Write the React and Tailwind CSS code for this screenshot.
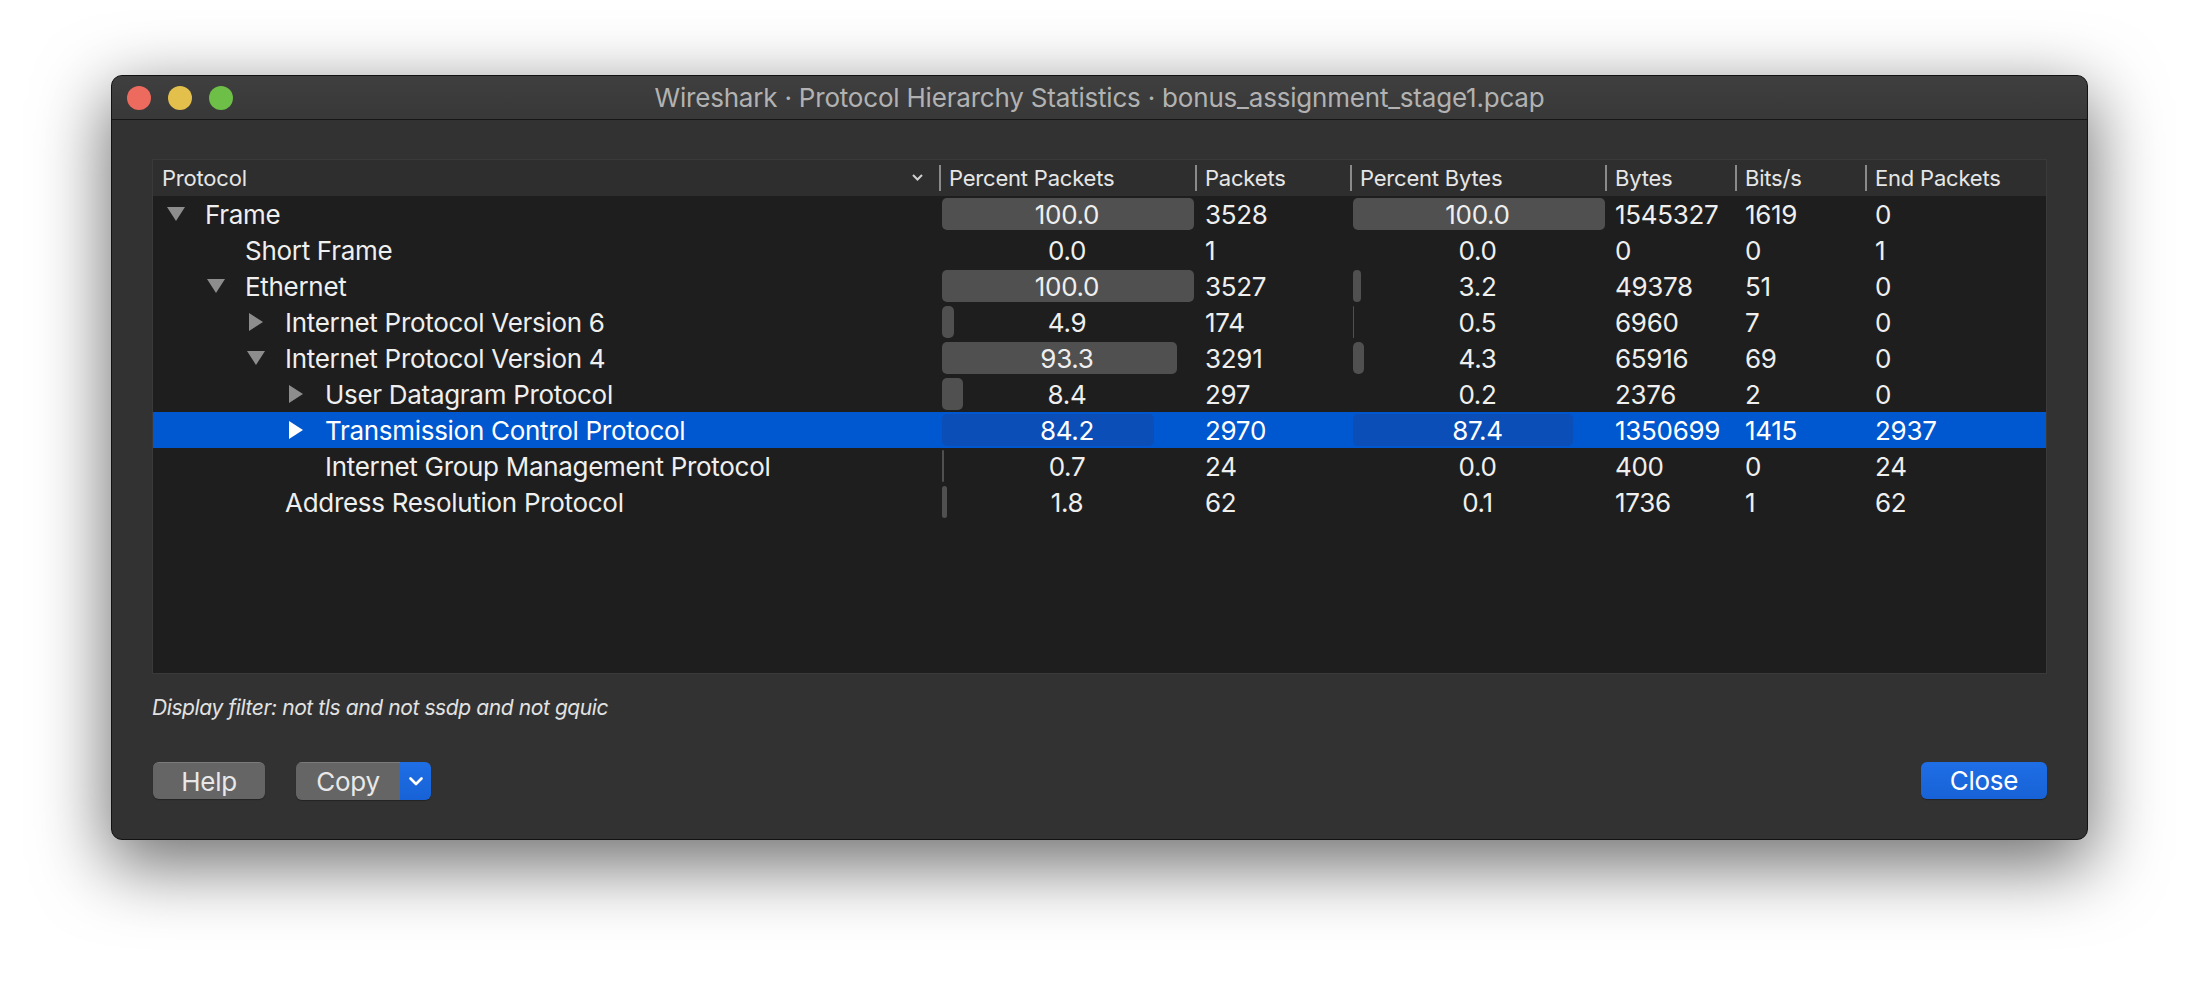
import React from "react";

const rows = [
  { name: "Frame", depth: 0, tri: "down", pp: 100.0, p: 3528, pb: 100.0, b: 1545327, bits: 1619, end: 0 },
  { name: "Short Frame", depth: 1, tri: null, pp: 0.0, p: 1, pb: 0.0, b: 0, bits: 0, end: 1 },
  { name: "Ethernet", depth: 1, tri: "down", pp: 100.0, p: 3527, pb: 3.2, b: 49378, bits: 51, end: 0 },
  { name: "Internet Protocol Version 6", depth: 2, tri: "right", pp: 4.9, p: 174, pb: 0.5, b: 6960, bits: 7, end: 0 },
  { name: "Internet Protocol Version 4", depth: 2, tri: "down", pp: 93.3, p: 3291, pb: 4.3, b: 65916, bits: 69, end: 0 },
  { name: "User Datagram Protocol", depth: 3, tri: "right", pp: 8.4, p: 297, pb: 0.2, b: 2376, bits: 2, end: 0 },
  { name: "Transmission Control Protocol", depth: 3, tri: "right", pp: 84.2, p: 2970, pb: 87.4, b: 1350699, bits: 1415, end: 2937, sel: true },
  { name: "Internet Group Management Protocol", depth: 3, tri: null, pp: 0.7, p: 24, pb: 0.0, b: 400, bits: 0, end: 24 },
  { name: "Address Resolution Protocol", depth: 2, tri: null, pp: 1.8, p: 62, pb: 0.1, b: 1736, bits: 1, end: 62 },
];

const GRID = "grid grid-cols-[786px_256px_155px_255px_130px_130px_1fr]";

function Triangle({ dir, sel }) {
  const fill = sel ? "#ffffff" : "#8d8d8d";
  if (dir === "down") {
    return (
      <svg width="18" height="14" viewBox="0 0 18 14">
        <polygon points="0,0 18,0 9,14" fill={fill} />
      </svg>
    );
  }
  if (dir === "right") {
    return (
      <svg width="14" height="18" viewBox="0 0 14 18">
        <polygon points="0,0 14,9 0,18" fill={fill} />
      </svg>
    );
  }
  return null;
}

function PctCell({ value, sel }) {
  const w = value * 2.52;
  return (
    <div className="relative flex h-[36px] items-center justify-center">
      {w >= 1 && (
        <div
          className={
            "absolute left-[3px] top-[2px] bottom-[2px] rounded-[5px] " +
            (sel ? "bg-[#0b4eb8]" : "bg-[#505050]")
          }
          style={{ width: w + "px" }}
        />
      )}
      <span className="relative">{value.toFixed(1)}</span>
    </div>
  );
}

function NumCell({ children }) {
  return <div className="flex h-[36px] items-center pl-[10px]">{children}</div>;
}

function HeaderCell({ children, sep = true }) {
  return (
    <div className="relative flex h-[36px] items-center pl-[10px]">
      {sep && <div className="absolute left-0 top-[5px] h-[26px] w-[2px] bg-[#8a8a8a]" />}
      {children}
    </div>
  );
}

export default function App() {
  return (
    <div className="h-[988px] w-[2200px] overflow-hidden bg-white pl-[111px] pt-[75px] font-['Inter',sans-serif]">
      <div className="flex h-[765px] w-[1977px] flex-col overflow-hidden rounded-[11px] border border-[#121212] bg-[#323232] shadow-[0_22px_70px_4px_rgba(0,0,0,0.56)]">
        {/* Title bar */}
        <div className="relative flex h-[44px] shrink-0 items-center border-b border-[#161616] bg-gradient-to-b from-[#3f3f3f] to-[#383838] pl-[15px]">
          <div className="flex items-center gap-[17px]">
            <div className="h-[24px] w-[24px] rounded-full bg-[#ec6a5e]" />
            <div className="h-[24px] w-[24px] rounded-full bg-[#e3c04c]" />
            <div className="h-[24px] w-[24px] rounded-full bg-[#6dbf48]" />
          </div>
          <div className="pointer-events-none absolute inset-0 flex items-center justify-center text-[26px] tracking-[-0.2px] text-[#b2b2b2]">
            Wireshark · Protocol Hierarchy Statistics · bonus_assignment_stage1.pcap
          </div>
        </div>

        {/* Content */}
        <div className="flex flex-1 flex-col px-[40px] pt-[39px]">
          {/* Table */}
          <div className="h-[515px] w-full overflow-hidden border border-[#3a3a3a] bg-[#1e1e1e] text-[26px] tracking-[-0.3px] text-[#efefef]">
            <div className={GRID + " h-[36px] bg-[#2e2e2e] text-[22px] tracking-[-0.2px] text-[#e6e6e6]"}>
              <div className="relative flex h-[36px] items-center pl-[9px]">
                Protocol
                <svg className="absolute right-[16px] top-[14px]" width="11" height="7" viewBox="0 0 11 7">
                  <polyline points="1,1 5.5,5.5 10,1" fill="none" stroke="#d0d0d0" strokeWidth="2" />
                </svg>
              </div>
              <HeaderCell>Percent Packets</HeaderCell>
              <HeaderCell>Packets</HeaderCell>
              <HeaderCell>Percent Bytes</HeaderCell>
              <HeaderCell>Bytes</HeaderCell>
              <HeaderCell>Bits/s</HeaderCell>
              <HeaderCell>End Packets</HeaderCell>
            </div>
            {rows.map((r) => (
              <div key={r.name} className={GRID + " h-[36px] " + (r.sel ? "bg-[#0058d0] text-white" : "")}>
                <div className="flex h-[36px] items-center" style={{ paddingLeft: 14 + 40 * r.depth + "px" }}>
                  <div className="mr-[20px] flex w-[18px] items-center justify-center">
                    <Triangle dir={r.tri} sel={r.sel} />
                  </div>
                  <span className="whitespace-nowrap">{r.name}</span>
                </div>
                <PctCell value={r.pp} sel={r.sel} />
                <NumCell>{r.p}</NumCell>
                <PctCell value={r.pb} sel={r.sel} />
                <NumCell>{r.b}</NumCell>
                <NumCell>{r.bits}</NumCell>
                <NumCell>{r.end}</NumCell>
              </div>
            ))}
          </div>

          {/* Display filter */}
          <div className="mt-[19px] h-[30px] text-[21px] italic leading-[30px] tracking-[-0.4px] text-[#e2e2e2]">
            Display filter: not tls and not ssdp and not gquic
          </div>

          {/* Buttons */}
          <div className="mt-[39px] flex items-start">
            <button className="ml-[1px] flex h-[37px] w-[112px] items-center justify-center rounded-[6px] border-t border-[#7a7a7a] bg-[#656565] text-[26px] tracking-[-0.3px] text-[#e8e8e8] shadow-[0_1px_1px_rgba(0,0,0,0.3)]">
              Help
            </button>
            <div className="ml-[31px] flex h-[38px] overflow-hidden rounded-[6px] shadow-[0_1px_1px_rgba(0,0,0,0.3)]">
              <div className="flex w-[104px] items-center justify-center border-t border-[#7a7a7a] bg-[#656565] text-[26px] tracking-[-0.3px] text-[#e8e8e8]">
                Copy
              </div>
              <div className="flex w-[31px] items-center justify-center bg-gradient-to-b from-[#1f6ee6] to-[#1762d6]">
                <svg width="14" height="9" viewBox="0 0 14 9">
                  <polyline points="1.5,1.5 7,7 12.5,1.5" fill="none" stroke="#ffffff" strokeWidth="2.6" strokeLinecap="round" strokeLinejoin="round" />
                </svg>
              </div>
            </div>
            <button className="ml-auto flex h-[37px] w-[126px] items-center justify-center rounded-[6px] bg-gradient-to-b from-[#1f6ee6] to-[#1762d6] text-[26px] tracking-[-0.3px] text-white shadow-[0_1px_1px_rgba(0,0,0,0.3)]">
              Close
            </button>
          </div>
        </div>
      </div>
    </div>
  );
}
